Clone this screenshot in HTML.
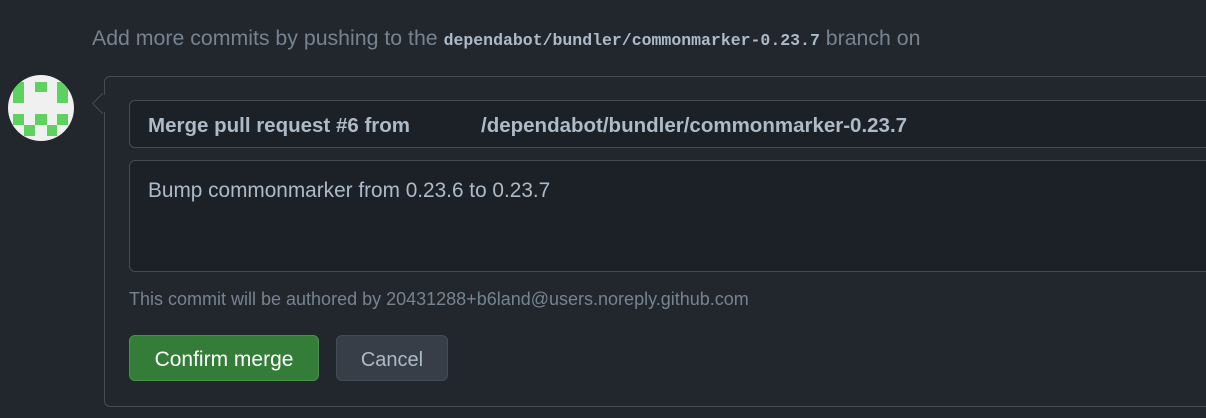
<!DOCTYPE html><html><head><style>
body{margin:0;width:1206px;height:418px;background:#22272e;font-family:"Liberation Sans",sans-serif;position:relative;overflow:hidden}
.a{position:absolute}
.top{left:92px;top:26px;font-size:21.3px;color:#768390;white-space:nowrap}
.top b{font-family:"Liberation Mono",monospace;font-size:16.5px;color:#adbac7}
.card{left:104px;top:76px;width:1200px;height:329px;border:1px solid #444c56;border-radius:6px;background:#22272e}
.arrow{left:95px;top:96px;width:14px;height:14px;border-left:1px solid #444c56;border-bottom:1px solid #444c56;transform:rotate(45deg);background:#22272e}
.inp{left:129px;width:1200px;border:1px solid #444c56;border-radius:6px;background:#1c2128;color:#adbac7;box-sizing:border-box}
.btn{top:335px;height:46px;border-radius:6px;box-sizing:border-box;font-size:20px;display:flex;align-items:center;justify-content:center;padding-top:4px}
</style></head><body>
<div class="a top">Add more commits by pushing to the <b>dependabot/bundler/commonmarker-0.23.7</b> branch on</div>
<div class="a" style="left:8px;top:75px;width:66px;height:66px;border-radius:50%;background:#f0f0f0;overflow:hidden">
<svg width="66" height="66"><g fill="#5ed25e" transform="translate(-8,-75)">
<rect x="13" y="82" width="11" height="21"/><rect x="35" y="82" width="12" height="10"/><rect x="57" y="82" width="11" height="21"/>
<rect x="13" y="114" width="11" height="11"/><rect x="35" y="114" width="12" height="11"/><rect x="57" y="114" width="11" height="11"/>
<rect x="24" y="125" width="11" height="11"/><rect x="47" y="125" width="10" height="11"/></g></svg></div>
<div class="a card"></div>
<div class="a arrow"></div>
<div class="a inp" style="top:100px;height:48px"></div>
<div class="a" style="left:148px;top:114px;font-size:20.5px;font-weight:bold;color:#adbac7;white-space:nowrap">Merge pull request #6 from</div>
<div class="a" style="left:481px;top:114px;font-size:20.5px;font-weight:bold;color:#adbac7;white-space:nowrap">/dependabot/bundler/commonmarker-0.23.7</div>
<div class="a inp" style="top:160px;height:112px"></div>
<div class="a" style="left:148px;top:179px;font-size:20.8px;color:#adbac7;white-space:nowrap">Bump commonmarker from 0.23.6 to 0.23.7</div>
<div class="a" style="left:129px;top:289px;font-size:18px;color:#768390;white-space:nowrap">This commit will be authored by 20431288+b6land@users.noreply.github.com</div>
<div class="a btn" style="left:129px;width:190px;background:#347d39;border:1px solid #46954a;color:#fff;font-size:21px">Confirm merge</div>
<div class="a btn" style="left:336px;width:112px;background:#373e47;border:1px solid #444c56;color:#adbac7">Cancel</div>
</body></html>
